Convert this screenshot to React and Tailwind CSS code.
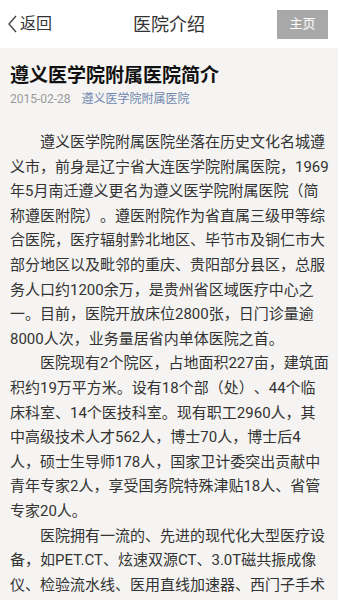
import React from "react";

const font = "font-['Roboto','Noto_Sans_CJK_SC',sans-serif]";

const paragraphs = [
  "遵义医学院附属医院坐落在历史文化名城遵义市，前身是辽宁省大连医学院附属医院，1969年5月南迁遵义更名为遵义医学院附属医院（简称遵医附院）。遵医附院作为省直属三级甲等综合医院，医疗辐射黔北地区、毕节市及铜仁市大部分地区以及毗邻的重庆、贵阳部分县区，总服务人口约1200余万，是贵州省区域医疗中心之一。目前，医院开放床位2800张，日门诊量逾8000人次，业务量居省内单体医院之首。",
  "医院现有2个院区，占地面积227亩，建筑面积约19万平方米。设有18个部（处）、44个临床科室、14个医技科室。现有职工2960人，其中高级技术人才562人，博士70人，博士后4人，硕士生导师178人，国家卫计委突出贡献中青年专家2人，享受国务院特殊津贴18人、省管专家20人。",
  "医院拥有一流的、先进的现代化大型医疗设备，如PET.CT、炫速双源CT、3.0T磁共振成像仪、检验流水线、医用直线加速器、西门子手术室等。",
];

export default function App() {
  return (
    <div className={`w-[338px] h-[600px] overflow-hidden bg-[#f5f4f2] ${font}`}>
      {/* header */}
      <div className="h-[48px] bg-white flex items-center justify-between relative">
        <div className="flex items-center pl-[7px] text-[#333] text-[16px]">
          <svg width="11" height="18" viewBox="0 0 11 18" className="mr-[2px]">
            <path d="M9 1 L2 9 L9 17" fill="none" stroke="#444" strokeWidth="1.4" />
          </svg>
          <span>返回</span>
        </div>
        <div className="absolute left-0 right-0 text-center text-[18px] text-[#333] pointer-events-none">
          医院介绍
        </div>
        <div className="mr-[10px] w-[51px] h-[29px] bg-[#a8a8a8] text-white text-[13px] flex items-center justify-center">
          主页
        </div>
      </div>

      {/* article */}
      <div className="pl-[10px] pr-[8px] pt-[15px]">
        <h1 className="text-[19px] font-bold text-[#111] leading-[26px]">遵义医学院附属医院简介</h1>
        <div className="flex items-center text-[12px] mt-[1px] leading-[18px]">
          <span className="text-[#9a9a9a]">2015-02-28</span>
          <span className="ml-[11px] text-[#7088b0]">遵义医学院附属医院</span>
        </div>
        <div className="mt-[22px] text-[15px] text-[#333] leading-[24.6px] [text-spacing-trim:space-all]">
          {paragraphs.map((p, i) => (
            <p key={i} className="indent-[2em]">{p}</p>
          ))}
        </div>
      </div>
    </div>
  );
}
